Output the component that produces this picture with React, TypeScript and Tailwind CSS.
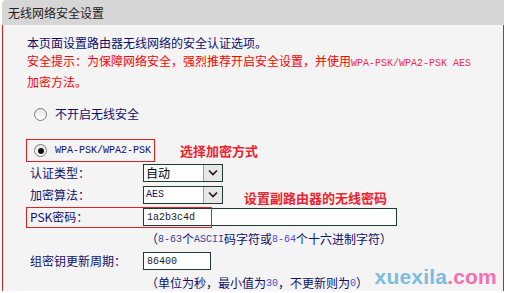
import React from 'react';

const cjk = "font-['SimSun','Noto_Sans_CJK_SC',sans-serif]";
const mono = "font-['Liberation_Mono','Noto_Sans_CJK_SC',monospace]";

const Radio = ({ checked }: { checked?: boolean }) => (
  <span className="w-[13px] h-[13px] rounded-full border border-[#7a7a7a] bg-gradient-to-b from-[#e6e6e6] to-white flex items-center justify-center shrink-0">
    {checked && <span className="w-[6px] h-[6px] rounded-full bg-[#111]" />}
  </span>
);

const Select = ({ value, monoText }: { value: string; monoText?: boolean }) => (
  <div className="w-[80px] h-[18px] border border-[#1e3a32] bg-white flex items-stretch">
    <span className={`flex-1 pl-[2px] flex items-center ${monoText ? `${mono} text-[10px] text-[#10106a]` : 'text-[12px] text-black'}`}>{value}</span>
    <span className="w-[19px] bg-[#e8e8e8] border-l border-[#9a9a9a] flex items-center justify-center">
      <svg width="10" height="7" viewBox="0 0 10 7">
        <path d="M1 1.5 L5 5.5 L9 1.5" fill="none" stroke="#1a1a1a" strokeWidth="1.6" />
      </svg>
    </span>
  </div>
);

const Label = ({ children }: { children: React.ReactNode }) => (
  <span className="w-[116px] pl-[3px] shrink-0 text-[12px] text-[#10106a]">{children}</span>
);

export default function App() {
  return (
    <div className={`w-[505px] h-[293px] bg-white overflow-hidden ${cjk}`}>
      <div className="ml-[2px] w-[502px]">
        <div className="h-[25px] bg-[#d6d6d6] rounded-tl-[4px] flex items-center pl-[6px] text-[12px] text-[#222]">
          无线网络安全设置
        </div>
        <div className="relative h-[266px] bg-[#f4f4f4] border-l border-r border-[#d82020] pl-[24px] pt-[9px] overflow-hidden">
          <div className="text-[12px] leading-[18px]">
            <p className="text-[#10106a]">本页面设置路由器无线网络的安全认证选项。</p>
            <p className="text-[#ff0000]">
              安全提示：为保障网络安全，强烈推荐开启安全设置，并使用<span className={`${mono} text-[10px] text-[#f02a50]`}>WPA-PSK/WPA2-PSK AES</span>
            </p>
            <p className="text-[#ff0000]">加密方法。</p>
          </div>

          <div className="mt-[14px] h-[18px] flex items-center pl-[7px] gap-[8px]">
            <Radio />
            <span className="text-[12px] text-[#10106a]">不开启无线安全</span>
          </div>

          <div className="mt-[16px] h-[23px] flex items-center -ml-px">
            <div className="w-[129px] h-[23px] border border-[#e02020] flex items-center pl-[7px] gap-[8px]">
              <Radio checked />
              <span className={`${mono} text-[10px] text-[#10106a]`}>WPA-PSK/WPA2-PSK</span>
            </div>
            <span className="ml-[25px] text-[13px] font-bold text-[#f0202e]">选择加密方式</span>
          </div>

          <div className="h-[21px] flex items-center">
            <Label>认证类型：</Label>
            <Select value="自动" />
          </div>

          <div className="h-[23px] flex items-center">
            <Label>加密算法：</Label>
            <Select value="AES" monoText />
            <span className="ml-[21px] mt-[6px] text-[13px] font-bold text-[#f0202e]">设置副路由器的无线密码</span>
          </div>

          <div className="relative h-[22px] flex items-center">
            <Label>PSK密码：</Label>
            <div className="w-[254px] h-[18px] border border-[#1e3a32] bg-white flex items-center pl-[3px]">
              <span className={`${mono} text-[10px] text-[#1a1a1a]`}>1a2b3c4d</span>
            </div>
            <div className="absolute left-[-1px] top-[1px] w-[186px] h-[21px] border border-[#e02020]" />
          </div>

          <div className="h-[22px] flex items-center pl-[119px] text-[12px] text-[#10106a]">
            （<span className={`${mono} text-[10px] text-[#3a3a9a]`}>8-63</span>个<span className={`${mono} text-[10px] text-[#3a3a9a]`}>ASCII</span>码字符或<span className={`${mono} text-[10px] text-[#4a4acc]`}>8-64</span>个十六进制字符）
          </div>

          <div className="h-[22px] flex items-center">
            <Label>组密钥更新周期：</Label>
            <div className="w-[68px] h-[18px] border border-[#1e3a32] bg-white flex items-center pl-[3px]">
              <span className={`${mono} text-[10px] text-[#1a1a1a]`}>86400</span>
            </div>
          </div>

          <div className="h-[22px] flex items-center pl-[119px] text-[12px] text-[#10106a]">
            （单位为秒，最小值为<span className={`${mono} text-[10px] text-[#4a4acc]`}>30</span>，不更新则为<span className={`${mono} text-[10px] text-[#4a4acc]`}>0</span>）
          </div>

          <div className="absolute right-[6px] bottom-[4px] font-['Liberation_Sans',Arial,sans-serif] text-[21px] font-bold leading-none tracking-[0.2px]">
            <span className="text-[#7dbbe0]">xuexila</span>
            <span className="text-[#f46fae]">.com</span>
          </div>
        </div>
      </div>
    </div>
  );
}
